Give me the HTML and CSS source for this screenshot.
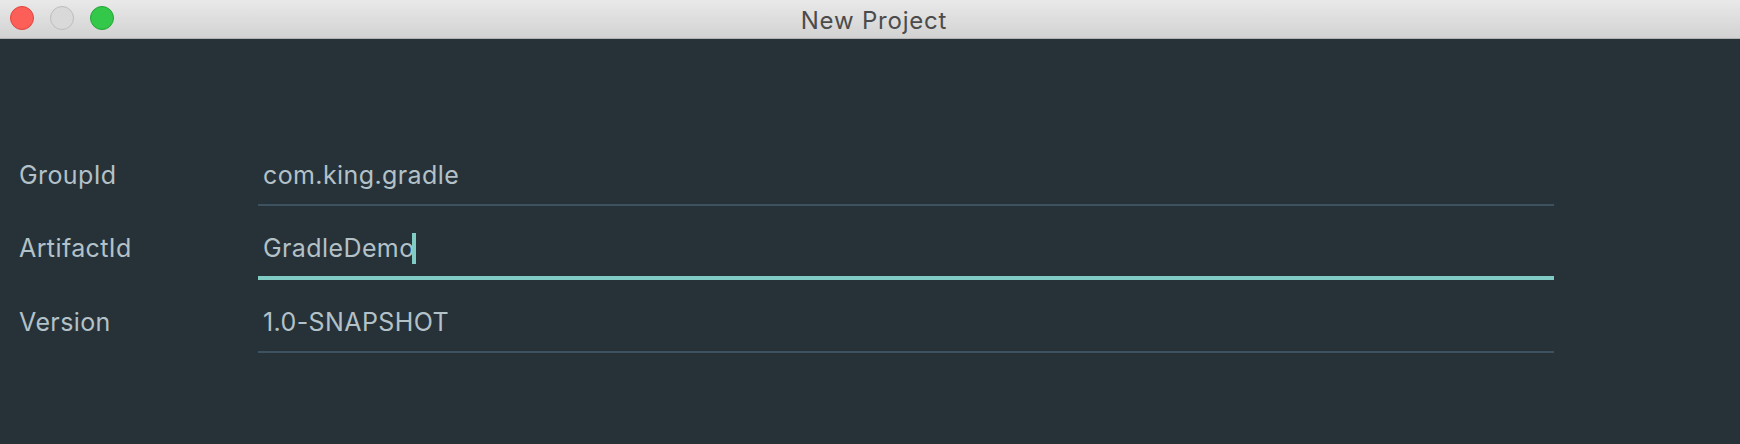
FILE: index.html
```html
<!DOCTYPE html>
<html lang="en">
<head>
    <meta charset="UTF-8">
    <meta name="viewport" content="width=device-width, initial-scale=1.0">
    <title>New Project</title>
    <link rel="stylesheet" href="styles.css">
</head>
<body>

<!-- Window title bar -->
<div class="titlebar">
    <div class="traffic-lights">
        <span class="light close"></span>
        <span class="light minimize"></span>
        <span class="light zoom"></span>
    </div>
    <div class="title">New Project</div>
</div>

<!-- Project coordinates form -->
<div class="form">
    <div class="row">
        <label class="label">GroupId</label>
        <div class="field">com.king.gradle</div>
    </div>
    <div class="row">
        <label class="label">ArtifactId</label>
        <div class="field focused">GradleDemo<span class="caret"></span></div>
    </div>
    <div class="row">
        <label class="label">Version</label>
        <div class="field">1.0-SNAPSHOT</div>
    </div>
</div>

</body>
</html>
```

FILE: styles.css
```css
body {
  margin: 0;
  padding: 0;
  height: 444px;
  overflow: hidden;
  background-color: #263238;
  font-family: Inter, "Noto Sans", sans-serif;
}

.titlebar {
  position: relative;
  height: 38px;
  background: linear-gradient(to bottom, #e9e9e9, #d2d2d2);
  border-bottom: 1px solid #b2b2b2;
  display: flex;
  align-items: center;
  justify-content: center;
}
.traffic-lights {
  position: absolute;
  left: 10px;
  top: 6px;
  display: flex;
  gap: 16px;
}
.light {
  width: 22px;
  height: 22px;
  border-radius: 50%;
  border: 1px solid;
}
.light.close {
  background-color: #fc5f57;
  border-color: #e0443e;
}
.light.minimize {
  background-color: #d9d9d9;
  border-color: #bdbdbd;
}
.light.zoom {
  background-color: #34c84a;
  border-color: #23a636;
}
.title {
  font-size: 24px;
  letter-spacing: 0.8px;
  color: #4b4b4b;
  margin: 2px 0 0 8px;
}

.form {
  padding: 121px 0 0 19px;
  display: flex;
  flex-direction: column;
  gap: 27px;
}
.row {
  display: grid;
  grid-template-columns: 239px 1296px;
  align-items: baseline;
}
.label,
.field {
  font-size: 25px;
  letter-spacing: 0.4px;
  line-height: 30px;
  color: #b3c1c8;
}
.field {
  padding: 0 5px 14px 5px;
  border-bottom: 2px solid #3c5260;
}
.field.focused {
  padding-bottom: 12px;
  border-bottom: 4px solid #80cbc4;
}
.caret {
  display: inline-block;
  width: 4px;
  height: 31px;
  margin-left: -3px;
  background-color: #80cbc4;
  vertical-align: -7px;
}
```
